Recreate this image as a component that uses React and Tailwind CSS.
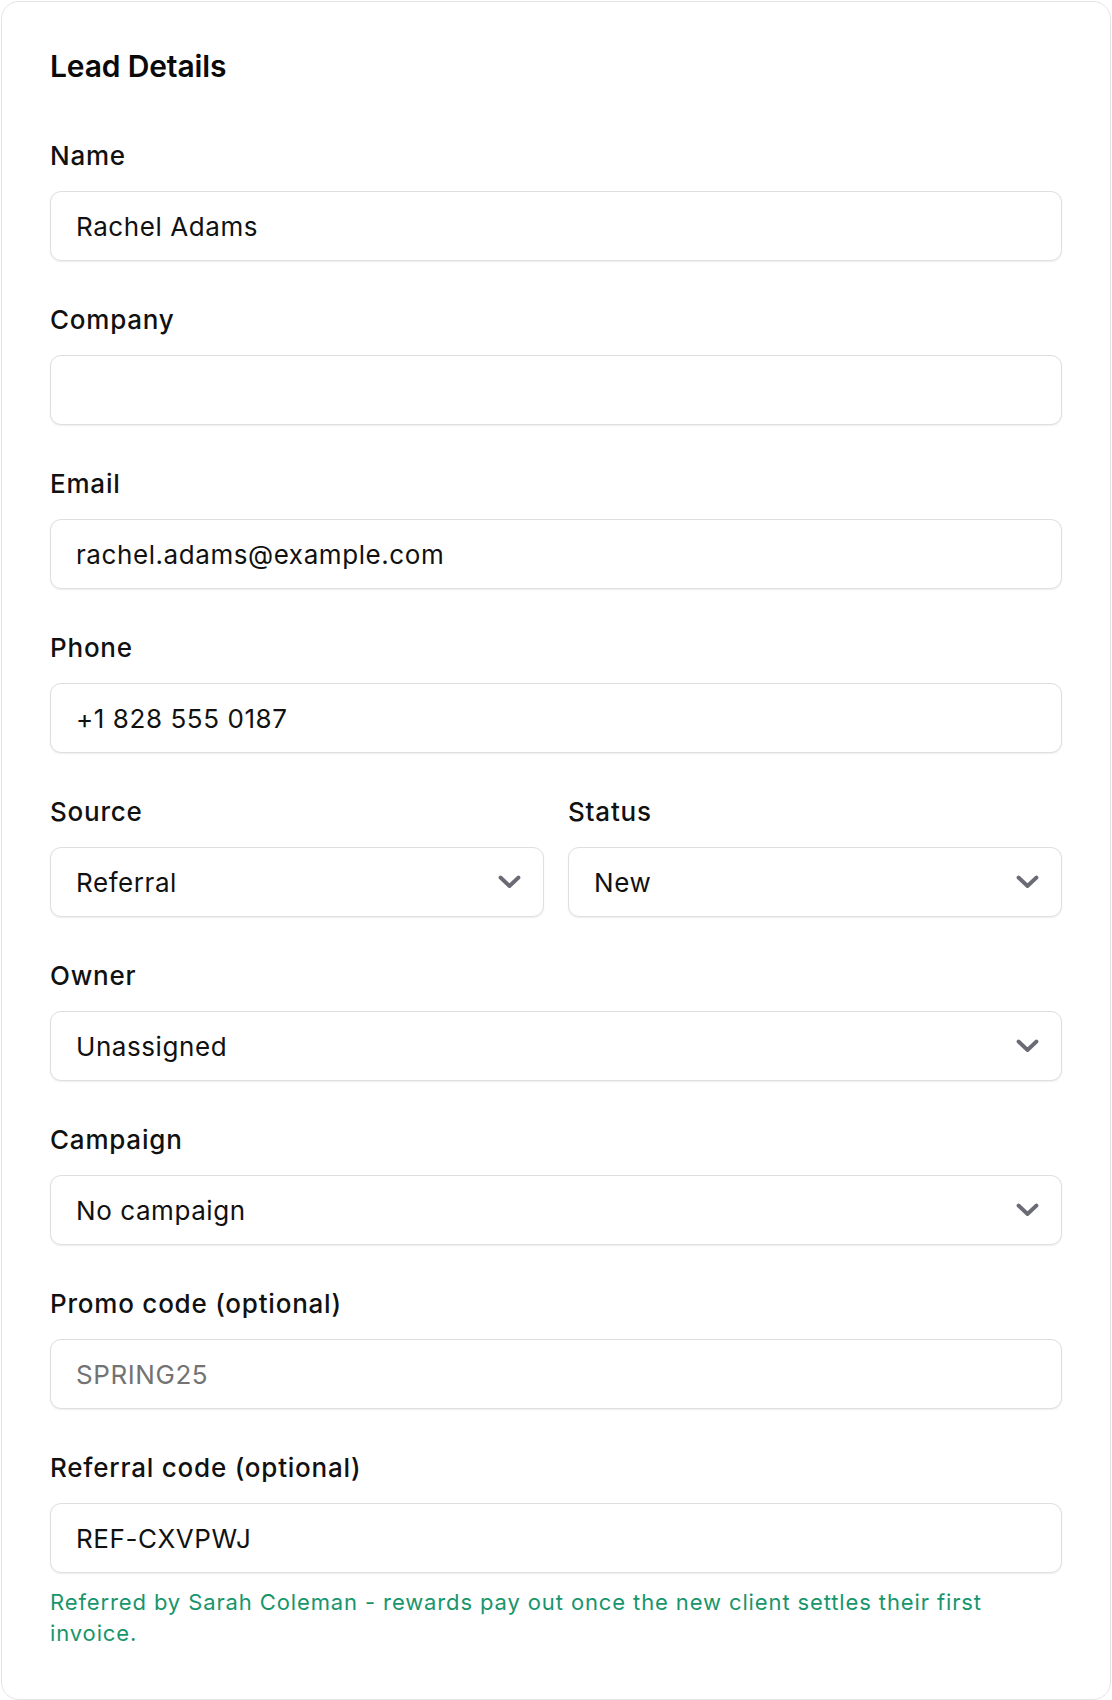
const fieldBox =
  "h-[70px] w-full rounded-[11px] border border-[#dfdfe2] bg-white px-[25px] text-[26px] tracking-[0.022em] text-[#111111] shadow-[0_1px_2px_rgba(0,0,0,0.07)] outline-none";

const Field = ({ label, children }) => (
  <div className="flex flex-col">
    <label className="h-8 text-[26px] leading-8 font-medium tracking-[0.03em] text-[#111111]">
      {label}
    </label>
    <div className="mt-[19px]">{children}</div>
  </div>
);

const TextInput = ({ value, placeholder }) => (
  <input
    type="text"
    defaultValue={value}
    placeholder={placeholder}
    className={`${fieldBox} placeholder:text-[#737373]`}
  />
);

const Select = ({ value, options }) => (
  <div className="relative">
    <select defaultValue={value} className={`${fieldBox} appearance-none pr-16`}>
      {options.map((o) => (
        <option key={o}>{o}</option>
      ))}
    </select>
    {/* chevron */}
    <svg
      className="pointer-events-none absolute right-[23px] top-1/2 -translate-y-1/2"
      width="23"
      height="14"
      viewBox="0 0 23 14"
      fill="none"
    >
      <path
        d="M2.5 2.5 L11.5 11 L20.5 2.5"
        stroke="#6b6b76"
        strokeWidth="3.8"
        strokeLinecap="round"
        strokeLinejoin="round"
      />
    </svg>
  </div>
);

export default function App() {
  return (
    <div className="p-px font-['Inter','Noto_Sans',sans-serif] antialiased">
      <div className="rounded-[18px] border border-[#e4e4e6] bg-white px-[48px] pt-[46px] pb-[50px]">
        <h2 className="h-9 text-[30px] leading-9 font-semibold tracking-[-0.005em] text-[#0a0a0a]">
          Lead Details
        </h2>

        <div className="mt-[56px] flex flex-col gap-[43px]">
          <Field label="Name">
            <TextInput value="Rachel Adams" />
          </Field>
          <Field label="Company">
            <TextInput value="" />
          </Field>
          <Field label="Email">
            <TextInput value="rachel.adams@example.com" />
          </Field>
          <Field label="Phone">
            <TextInput value="+1 828 555 0187" />
          </Field>

          <div className="grid grid-cols-2 gap-6">
            <Field label="Source">
              <Select value="Referral" options={["Website", "Referral", "Event", "Cold call"]} />
            </Field>
            <Field label="Status">
              <Select value="New" options={["New", "Contacted", "Qualified", "Lost"]} />
            </Field>
          </div>

          <Field label="Owner">
            <Select value="Unassigned" options={["Unassigned", "Sarah Coleman", "Mark Lee"]} />
          </Field>
          <Field label="Campaign">
            <Select value="No campaign" options={["No campaign", "Spring Launch", "Q3 Webinar"]} />
          </Field>
          <Field label="Promo code (optional)">
            <TextInput value="" placeholder="SPRING25" />
          </Field>
          <Field label="Referral code (optional)">
            <TextInput value="REF-CXVPWJ" />
          </Field>
        </div>

        <p className="mt-[14px] text-[22px] leading-[31px] tracking-[0.04em] text-[#17956b]">
          Referred by Sarah Coleman - rewards pay out once the new client settles their first invoice.
        </p>
      </div>
    </div>
  );
}
